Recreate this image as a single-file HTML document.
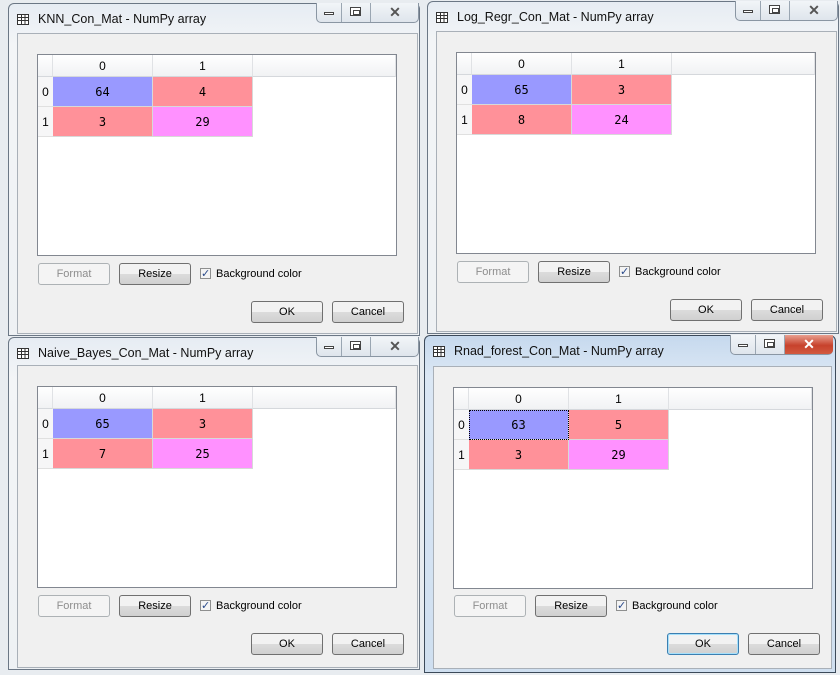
<!DOCTYPE html><html><head><style>
body{margin:0;width:840px;height:675px;background:#e8ecf0;position:relative;overflow:hidden;font-family:"Liberation Sans",sans-serif;font-size:12px;color:#000}
.w{position:absolute;width:412px;height:333px;background:linear-gradient(#e6ecf3,#f3f5f7 40px,#eef1f4);border:1px solid #6b7785;border-radius:6px 6px 0 0;box-sizing:border-box}
.w.act{background:linear-gradient(#c6d9ee,#dbe7f4 40px,#cfdff0);border-color:#3c4a5a}
.ic{position:absolute;left:8px;top:10px;width:12px;height:11px}
.tt{position:absolute;left:29px;top:8px;font-size:12.5px;color:#111}
.cb{position:absolute;right:0;top:-1px;width:103px;height:20px;border:1px solid #8a96a3;border-top:none;border-radius:0 0 5px 5px;background:linear-gradient(#f2f5f8,#dfe5ec);box-sizing:border-box}
.cb span{position:absolute;top:0;height:19px;border-right:1px solid #9aa6b2}
.mn{position:absolute;left:7px;top:9px;width:10px;height:3px;border:1px solid #444;box-sizing:border-box;background:#fff}
.mx{position:absolute;left:33px;top:4px;width:11px;height:9px;border:1px solid #444;box-sizing:border-box;background:#fff}
.mx:after{content:"";position:absolute;left:2px;top:2px;width:5px;height:3px;border:1px solid #444}
.cl{position:absolute;left:54px;top:0;width:48px;height:19px;text-align:center;font-size:14px;line-height:18px;color:#555;font-weight:bold}
.act .cl{background:linear-gradient(#e8a090,#c7422c 55%,#d25a40);color:#fff;border-radius:0 0 4px 0}
.pn{position:absolute;left:8px;top:29px;right:1px;bottom:1px;background:#f0f0f0;border:1px solid #a9b0b8}
.tb{position:absolute;left:19px;top:20px;width:360px;height:202px;background:#fff;border:1px solid #828790;box-sizing:border-box}
.hd{position:absolute;top:0;height:22px;background:linear-gradient(#fff,#f1f2f4);border-right:1px solid #e0e2e5;border-bottom:1px solid #d5d8dc;text-align:center;line-height:22px;box-sizing:border-box}
.rh{position:absolute;left:0;width:15px;height:30px;line-height:30px;text-align:center;background:#f6f6f7;border-bottom:1px solid #e0e0e0;box-sizing:border-box}
.c{position:absolute;width:100px;height:30px;line-height:30px;text-align:center;border-right:1px solid #d8d8d8;border-bottom:1px solid #d8d8d8;box-sizing:border-box;font-family:"DejaVu Sans Mono","Liberation Mono",monospace;font-size:12px}
.b{background:#9999ff}.r{background:#ff9199}.m{background:#ff91ff}
.bt{position:absolute;width:72px;height:22px;border:1px solid #707070;border-radius:3px;background:linear-gradient(#f2f2f2 50%,#dcdcdc 50%,#d0d0d0);box-sizing:border-box;text-align:center;line-height:20px;font-size:11px}
.bt.dis{border-color:#adb2b5;background:#f4f4f4;color:#8d8d8d}
.bt.ok{border-color:#3c7fb1;box-shadow:inset 0 0 0 1px #a6e0fb}
.ck{position:absolute;width:11px;height:11px;border:1px solid #8e8f8f;background:#f4f4f4;font-size:11px;line-height:10px;text-align:center;color:#2a4a8a;box-sizing:border-box}
.lb{position:absolute;font-size:11px}
</style></head><body>

<div class="w" style="left:8px;top:3px">
 <svg class="ic" viewBox="0 0 12 11"><rect x=".5" y=".5" width="11" height="10" fill="#fff" stroke="#333"/><path d="M0 3.5H12M0 6.5H12M4.5 0V11M8 0V11" stroke="#333"/></svg>
 <div class="tt">KNN_Con_Mat - NumPy array</div>
 <div class="cb"><span style="left:0;width:24px"></span><span style="left:24px;width:29px"></span><div class="mn"></div><div class="mx"></div><div class="cl">✕</div></div>
 <div class="pn">
  <div class="tb">
   <div class="hd" style="left:0;width:15px"></div><div class="hd" style="left:15px;width:100px">0</div><div class="hd" style="left:115px;width:100px">1</div><div class="hd" style="left:215px;width:143px"></div>
   <div class="rh" style="top:22px">0</div><div class="rh" style="top:52px">1</div>
   <div class="c b" style="left:15px;top:22px">64</div><div class="c r" style="left:115px;top:22px">4</div>
   <div class="c r" style="left:15px;top:52px">3</div><div class="c m" style="left:115px;top:52px">29</div>
  </div>
  <div class="bt dis" style="left:20px;top:229px">Format</div>
  <div class="bt" style="left:101px;top:229px">Resize</div>
  <div class="ck" style="left:182px;top:234px">✓</div><div class="lb" style="left:198px;top:234px">Background color</div>
  <div class="bt" style="left:233px;top:267px">OK</div>
  <div class="bt" style="left:314px;top:267px">Cancel</div>
 </div>
</div>

<div class="w" style="left:427px;top:1px">
 <svg class="ic" viewBox="0 0 12 11"><rect x=".5" y=".5" width="11" height="10" fill="#fff" stroke="#333"/><path d="M0 3.5H12M0 6.5H12M4.5 0V11M8 0V11" stroke="#333"/></svg>
 <div class="tt">Log_Regr_Con_Mat - NumPy array</div>
 <div class="cb"><span style="left:0;width:24px"></span><span style="left:24px;width:29px"></span><div class="mn"></div><div class="mx"></div><div class="cl">✕</div></div>
 <div class="pn">
  <div class="tb">
   <div class="hd" style="left:0;width:15px"></div><div class="hd" style="left:15px;width:100px">0</div><div class="hd" style="left:115px;width:100px">1</div><div class="hd" style="left:215px;width:143px"></div>
   <div class="rh" style="top:22px">0</div><div class="rh" style="top:52px">1</div>
   <div class="c b" style="left:15px;top:22px">65</div><div class="c r" style="left:115px;top:22px">3</div>
   <div class="c r" style="left:15px;top:52px">8</div><div class="c m" style="left:115px;top:52px">24</div>
  </div>
  <div class="bt dis" style="left:20px;top:229px">Format</div>
  <div class="bt" style="left:101px;top:229px">Resize</div>
  <div class="ck" style="left:182px;top:234px">✓</div><div class="lb" style="left:198px;top:234px">Background color</div>
  <div class="bt" style="left:233px;top:267px">OK</div>
  <div class="bt" style="left:314px;top:267px">Cancel</div>
 </div>
</div>

<div class="w" style="left:8px;top:337px">
 <svg class="ic" viewBox="0 0 12 11"><rect x=".5" y=".5" width="11" height="10" fill="#fff" stroke="#333"/><path d="M0 3.5H12M0 6.5H12M4.5 0V11M8 0V11" stroke="#333"/></svg>
 <div class="tt">Naive_Bayes_Con_Mat - NumPy array</div>
 <div class="cb"><span style="left:0;width:24px"></span><span style="left:24px;width:29px"></span><div class="mn"></div><div class="mx"></div><div class="cl">✕</div></div>
 <div class="pn" style="top:27px">
  <div class="tb">
   <div class="hd" style="left:0;width:15px"></div><div class="hd" style="left:15px;width:100px">0</div><div class="hd" style="left:115px;width:100px">1</div><div class="hd" style="left:215px;width:143px"></div>
   <div class="rh" style="top:22px">0</div><div class="rh" style="top:52px">1</div>
   <div class="c b" style="left:15px;top:22px">65</div><div class="c r" style="left:115px;top:22px">3</div>
   <div class="c r" style="left:15px;top:52px">7</div><div class="c m" style="left:115px;top:52px">25</div>
  </div>
  <div class="bt dis" style="left:20px;top:229px">Format</div>
  <div class="bt" style="left:101px;top:229px">Resize</div>
  <div class="ck" style="left:182px;top:234px">✓</div><div class="lb" style="left:198px;top:234px">Background color</div>
  <div class="bt" style="left:233px;top:267px">OK</div>
  <div class="bt" style="left:314px;top:267px">Cancel</div>
 </div>
</div>

<div class="w act" style="left:424px;top:335px;height:338px">
 <svg class="ic" viewBox="0 0 12 11"><rect x=".5" y=".5" width="11" height="10" fill="#fff" stroke="#333"/><path d="M0 3.5H12M0 6.5H12M4.5 0V11M8 0V11" stroke="#333"/></svg>
 <div class="tt">Rnad_forest_Con_Mat - NumPy array</div>
 <div class="cb" style="right:2px"><span style="left:0;width:24px"></span><span style="left:24px;width:29px"></span><div class="mn"></div><div class="mx"></div><div class="cl">✕</div></div>
 <div class="pn" style="top:30px;left:8px;right:3px;bottom:3px">
  <div class="tb" style="left:19px">
   <div class="hd" style="left:0;width:15px"></div><div class="hd" style="left:15px;width:100px">0</div><div class="hd" style="left:115px;width:100px">1</div><div class="hd" style="left:215px;width:143px"></div>
   <div class="rh" style="top:22px">0</div><div class="rh" style="top:52px">1</div>
   <div class="c b" style="left:15px;top:22px;outline:1px dotted #000;outline-offset:-1px">63</div><div class="c r" style="left:115px;top:22px">5</div>
   <div class="c r" style="left:15px;top:52px">3</div><div class="c m" style="left:115px;top:52px">29</div>
  </div>
  <div class="bt dis" style="left:20px;top:228px">Format</div>
  <div class="bt" style="left:101px;top:228px">Resize</div>
  <div class="ck" style="left:182px;top:233px">✓</div><div class="lb" style="left:198px;top:233px">Background color</div>
  <div class="bt ok" style="left:233px;top:266px">OK</div>
  <div class="bt" style="left:314px;top:266px">Cancel</div>
 </div>
</div>
</body></html>
